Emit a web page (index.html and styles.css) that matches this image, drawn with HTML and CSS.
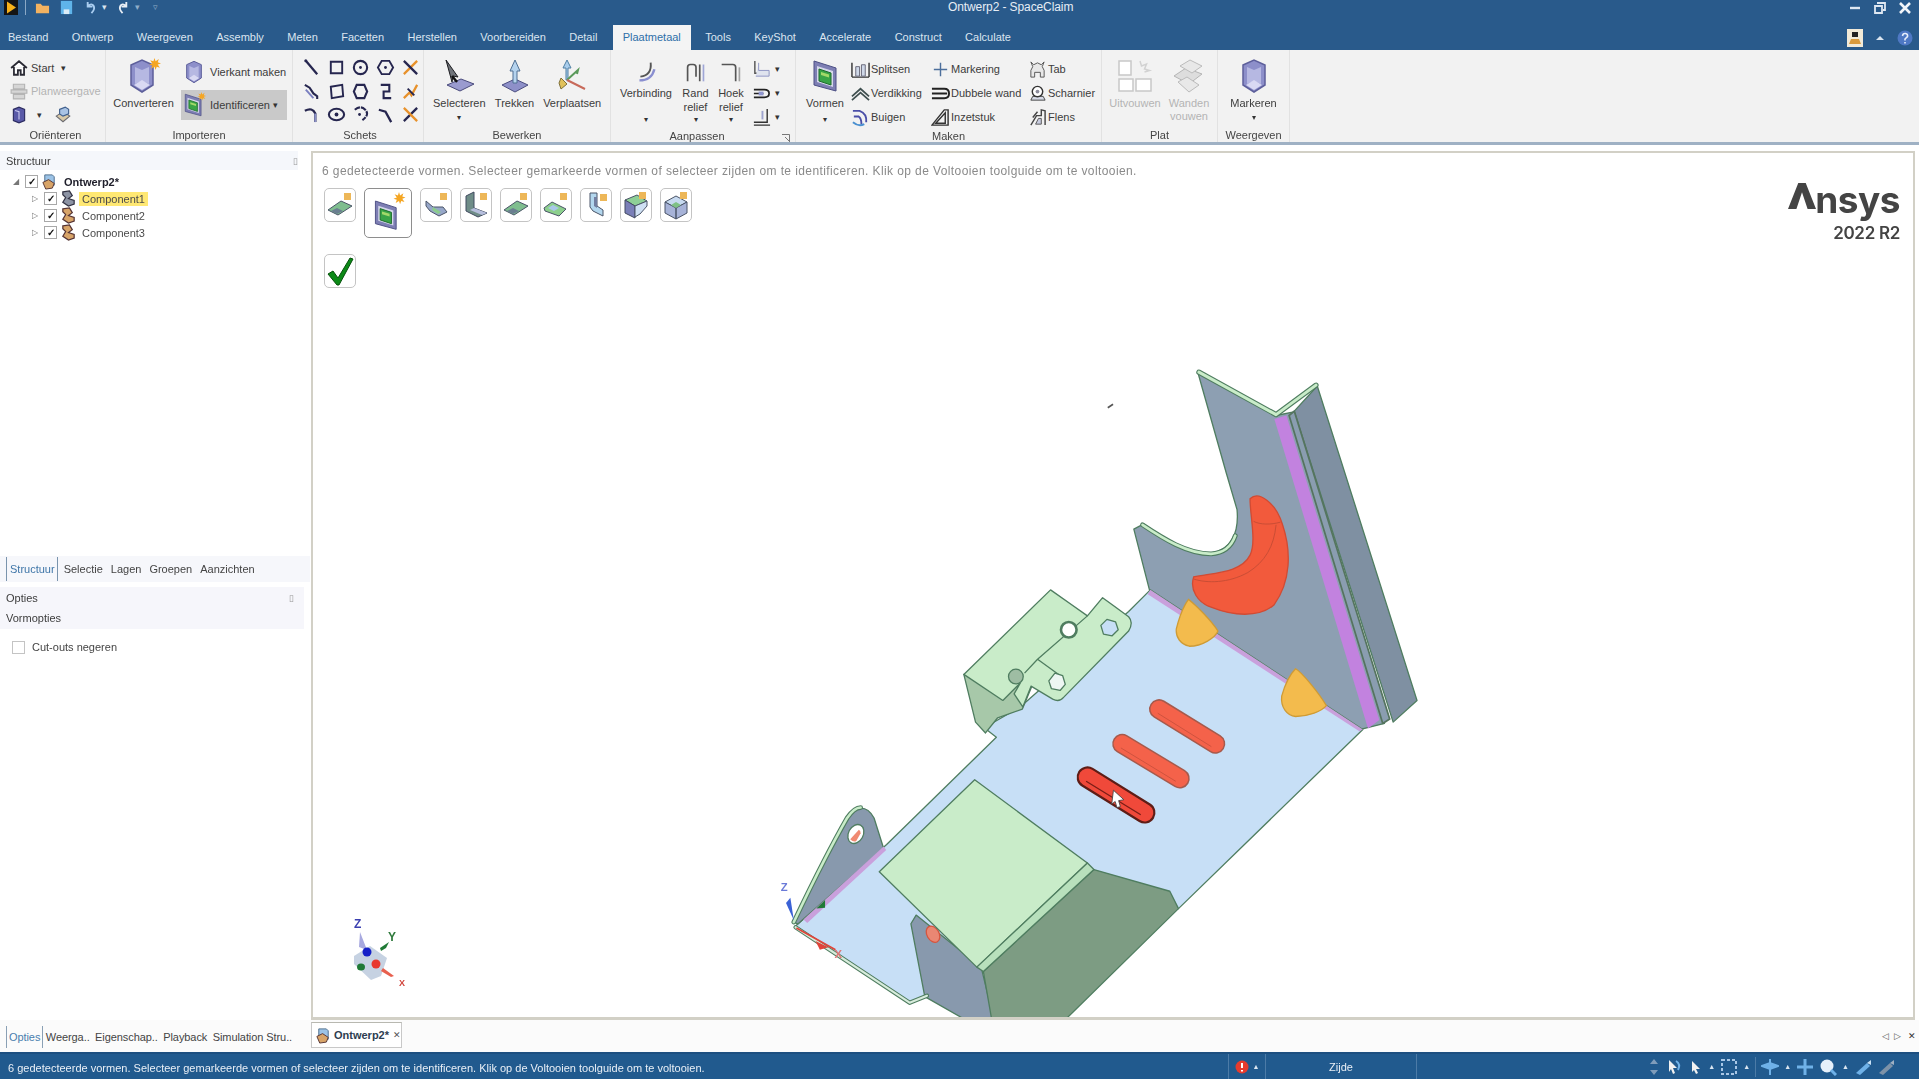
FILE: index.html
```html
<!DOCTYPE html>
<html lang="nl">
<head>
<meta charset="utf-8">
<title>Ontwerp2 - SpaceClaim</title>
<link rel="stylesheet" href="styles.css">
</head>
<body>
<svg class="sprite" xmlns="http://www.w3.org/2000/svg">
  <symbol id="sun" viewBox="0 0 12 12"><path d="M6 0l1 3 3-2-1 3 3 1-3 1 2 3-3-1-1 3-1-3-3 2 1-3-3-1 3-1-2-3 3 1z" fill="#f5a623"/></symbol>
  <symbol id="home" viewBox="0 0 16 16"><path d="M1 8l7-6 7 6M3.500 7v7h3.500v-4h2.500v4h3V7" fill="#fff" stroke="#2a2a34" stroke-width="1.600"/></symbol>
  <symbol id="plan" viewBox="0 0 16 16"><path d="M3 2h10v4H3zM1 7h14v3H1zM3 11h10v4H3z" fill="#d6d6d6" stroke="#b4b4b4"/></symbol>
  <symbol id="cube" viewBox="0 0 16 16"><path d="M3 3l5-2 5 2v10l-5 2-5-2z" fill="#5a5aa8" stroke="#2c2c60"/><path d="M4.500 4l3.500 1v7" fill="none" stroke="#c9c9ef"/></symbol>
  <symbol id="view" viewBox="0 0 16 16"><path d="M2 9l6-4 6 4-6 5z" fill="#d8c9a8" stroke="#6a6a70"/><path d="M5 3l5-2 3 2v4l-5 2-3-2z" fill="#a9c3e4" stroke="#3f5f8d"/></symbol>
  <symbol id="purple" viewBox="0 0 32 36"><path d="M5 7l11-5 11 5v20l-11 7-11-7z" fill="#8d8fca" stroke="#5d5f9b" stroke-width="1.500"/><path d="M9 9l7 3v11l-7 3zM23 9l-7 3v11l7 3z" fill="#b6b8e2"/><path d="M8 27l8-5 8 5-8 5z" fill="#d9d9f3"/></symbol>
  <symbol id="shape" viewBox="0 0 28 36"><path d="M3 3l22 7v23L3 27z" fill="#7e7fb4" stroke="#4c4f84"/><path d="M6 8l16 5v16L6 24z" fill="#d5d7ea"/><path d="M8 11l12 4v12L8 23z" fill="#39a447" stroke="#1d6b2b"/><path d="M10 14l8 2.500v3L10 17z" fill="#a3d96a"/></symbol>
  <symbol id="selectIco" viewBox="0 0 34 36"><path d="M5 27l14-6 13 5-14 7z" fill="#9a9bcf" stroke="#4a4b7c"/><path d="M4 2l12 17-5-1-1 6z" fill="#70747a" stroke="#1b1b1f"/><path d="M10 18l5 6" stroke="#111" stroke-width="2.500"/></symbol>
  <symbol id="pullIco" viewBox="0 0 34 36"><path d="M4 27l13-6 13 6-13 7z" fill="#8e90c9" stroke="#4c4e80"/><path d="M17 2l5 11-3 0v12h-4V13h-3z" fill="#b5d3ee" stroke="#4f6f93"/></symbol>
  <symbol id="moveIco" viewBox="0 0 34 36"><path d="M12 2l4 8h-3v12h-2V10H8z" fill="#a9cdec" stroke="#4f7fa3"/><path d="M12 22l11-10-1 4" fill="none" stroke="#5b9a5b" stroke-width="2"/><path d="M12 22l18 9" stroke="#c86a5a" stroke-width="2"/><path d="M6 20l6 6-6 5-2-6z" fill="#e1c15b" stroke="#7f7039"/></symbol>
  <symbol id="bend" viewBox="0 0 30 30"><path d="M20 5c1 9-3 14-11 15" fill="none" stroke="#555" stroke-width="2"/><path d="M8 24c8 0 14-4 16-12" fill="none" stroke="#8a8fd0" stroke-width="2.500"/></symbol>
  <symbol id="rand" viewBox="0 0 30 30"><path d="M6 25V10q0-3 3-3h3q3 0 3 3v10M19 7v18" fill="none" stroke="#555" stroke-width="1.800"/><path d="M23 7v18" stroke="#9fa6d6" stroke-width="1.800"/></symbol>
  <symbol id="hoek" viewBox="0 0 30 30"><path d="M5 7h12q3 0 3 3v15" fill="none" stroke="#555" stroke-width="1.800"/><path d="M24 10v15" stroke="#a3a3a3" stroke-width="1.800"/></symbol>
  <symbol id="s1" viewBox="0 0 20 20"><path d="M3 1v13h15" fill="none" stroke="#555" stroke-width="1.500"/><path d="M7 3v8h11v6H4" fill="#dfe3ee" stroke="#8d95c2"/></symbol>
  <symbol id="s2" viewBox="0 0 20 20"><path d="M2 6h11q5 0 5 4t-5 4H2M2 10h10" fill="none" stroke="#222" stroke-width="1.800"/><path d="M7 8h5v4H7z" fill="#8f95cf"/></symbol>
  <symbol id="s3" viewBox="0 0 20 20"><path d="M2 15h14V1M2 18h17" fill="none" stroke="#333" stroke-width="1.500"/><path d="M11 3v9" stroke="#9ea4cf" stroke-width="2"/></symbol>
  <symbol id="split" viewBox="0 0 20 20"><path d="M1 18V3M19 18V3M1 18h18" fill="none" stroke="#333" stroke-width="1.500"/><path d="M5 17V7h4v10zM11 17V5h4v12z" fill="#cfd8e8" stroke="#667"/></symbol>
  <symbol id="thick" viewBox="0 0 20 20"><path d="M1 13l9-8 9 8M1 17l9-8 9 8" fill="none" stroke="#3f4f4f" stroke-width="1.800"/></symbol>
  <symbol id="curl" viewBox="0 0 20 20"><path d="M2 3h7q8 3 7 12M3 9h5q3 2 3 8" fill="none" stroke="#4b4fa8" stroke-width="2"/><path d="M2 15q6 5 12 2" fill="none" stroke="#4a90d0" stroke-width="2"/></symbol>
  <symbol id="plus" viewBox="0 0 20 20"><path d="M10 3v14M3 10h14" stroke="#4c6f9c" stroke-width="1.500"/></symbol>
  <symbol id="double" viewBox="0 0 20 20"><path d="M1 5h13q5 0 5 5t-5 5H1M1 10h16" fill="none" stroke="#222" stroke-width="2"/></symbol>
  <symbol id="insert" viewBox="0 0 20 20"><path d="M1 18L14 2h4v16zM5 16L15 5v11z" fill="none" stroke="#333" stroke-width="1.500"/></symbol>
  <symbol id="tab" viewBox="0 0 20 20"><path d="M3 2l3 3 4-2 4 2 3-3-2 5 2 4v7h-4v-5H7v5H3v-7l2-4z" fill="#e8e8e8" stroke="#555"/></symbol>
  <symbol id="hinge" viewBox="0 0 20 20"><path d="M3 17h15l-2-4H5z" fill="#d5d9e6" stroke="#444"/><circle cx="10" cy="8" r="5.500" fill="#fff" stroke="#333" stroke-width="1.500"/><circle cx="10" cy="8" r="2" fill="#8c8c9c"/></symbol>
  <symbol id="flange" viewBox="0 0 20 20"><path d="M3 18l6-10h5V2l4 1v15M5 10l5-6" fill="none" stroke="#444" stroke-width="1.500"/><path d="M8 17l3-6h3v6z" fill="#c8cce0" stroke="#555"/></symbol>
  <symbol id="unfold" viewBox="0 0 36 36"><path d="M2 3h12v14H2zM2 21h14v12H2zM19 21h15v12H19z" fill="#fff" stroke="#c8c8c8" stroke-width="1.500"/><path d="M23 3l1.500 5 5-2-2 5 5 1.500-5 1.500" fill="none" stroke="#d2d2d2" stroke-width="1.500"/></symbol>
  <symbol id="walls" viewBox="0 0 36 36"><path d="M3 18l12-8 16 6-13 10z" fill="#ddd" stroke="#b5b5b5"/><path d="M9 8l10-6 12 6-10 7zM7 24l11 10 10-7-12-8z" fill="#e8e8e8" stroke="#bbb"/></symbol>
  <symbol id="tp" viewBox="0 0 30 32"><path d="M3 21l13-9 11 5-14 9z" fill="#7fbe8f" stroke="#4b5568"/><path d="M6 22l6-3 6 3-6 3z" fill="#6a7f90"/><rect x="19" y="4" width="7" height="7" fill="#edb758"/></symbol>
  <symbol id="tp2" viewBox="0 0 30 32"><path d="M5 12l7 6 10 0 4 5-8 4-9-5-4-5z" fill="#97a7c9" stroke="#4b5568"/><path d="M12 18l8 5-3 2-6-4z" fill="#8ccc8e"/><rect x="19" y="4" width="7" height="7" fill="#edb758"/></symbol>
  <symbol id="tp3" viewBox="0 0 30 32"><path d="M5 7l8-4v16l13 5-9 4-12-6z" fill="#6f8d88" stroke="#414a60"/><path d="M13 19l13 5-5 2-12-5z" fill="#b6bedd"/><rect x="19" y="4" width="7" height="7" fill="#edb758"/></symbol>
  <symbol id="tp4" viewBox="0 0 30 32"><path d="M3 19l8-6 14 7-7 7-14-5z" fill="#8ccf8d" stroke="#4b5568"/><path d="M7 19l5-3 6 3-5 3z" fill="#a9c8e8"/><rect x="19" y="4" width="7" height="7" fill="#edb758"/></symbol>
  <symbol id="tp5" viewBox="0 0 30 32"><path d="M9 4h7v13l6 4v6l-10-5-3-4z" fill="#b3d7ee" stroke="#4b5568"/><path d="M13 8h3v11l-3-2z" fill="#727ea0"/><rect x="19" y="5" width="7" height="7" fill="#edb758"/></symbol>
  <symbol id="tp6" viewBox="0 0 30 32"><path d="M4 11l12-5 10 6-12 5z" fill="#8ecf96" stroke="#4b5568"/><path d="M4 11v13l10 5V17z" fill="#7a7fb8" stroke="#414a60"/><path d="M14 17l12-5v5l-7 8-5 3z" fill="#cfe0f3" stroke="#4b5568"/><rect x="18" y="3" width="7" height="7" fill="#edb758"/></symbol>
  <symbol id="tp7" viewBox="0 0 30 32"><path d="M15 7l11 6-11 6-11-6z" fill="#c7daf0" stroke="#4b5568"/><path d="M4 13v11l11 6V19zM26 13v11l-11 6V19z" fill="#a7b3d8" stroke="#4b5568"/><path d="M15 19l-5-3 5-3 5 3z" fill="#7ec185"/><rect x="19" y="3" width="7" height="7" fill="#edb758"/></symbol>
  <symbol id="comp" viewBox="0 0 18 18"><path d="M3 2l7-1 3 5-4 3 6 2v4l-6 2-6-4 3-5-3-3z" fill="#d8a468" stroke="#533" stroke-width="1.300"/></symbol>
  <symbol id="comp1" viewBox="0 0 18 18"><path d="M3 2l7-1 3 5-4 3 6 2v4l-6 2-6-4 3-5-3-3z" fill="#8c93a4" stroke="#334" stroke-width="1.300"/></symbol>
  <symbol id="doc" viewBox="0 0 18 18"><path d="M4 2h8l2 2v9H4z" fill="#9cc3e6" stroke="#4c6d8c"/><path d="M2 10l6-3 6 4-2 5-7 1z" fill="#d8a468" stroke="#533"/></symbol>
</svg>

<div class="app">
  <header class="titlebar">
    <div class="qat">
      <svg class="qi logo-play" viewBox="0 0 14 15"><rect width="14" height="15" fill="#141414"/><path d="M3 1.500l9 6-9 6z" fill="#f7b21a"/></svg>
      <span class="qat-sep"></span>
      <svg class="qi" viewBox="0 0 16 16"><path d="M1 4h5l2 2h7v8H1z" fill="#f2b261"/></svg>
      <svg class="qi" viewBox="0 0 16 16"><path d="M2 1h12v14H2z" fill="#5fb4ea"/><path d="M5 10h6v5H5z" fill="#dcecf7"/></svg>
      <svg class="qi" viewBox="0 0 16 16"><path d="M5 2v5h5M5 7c5-6 10 1 4 7" fill="none" stroke="#a9cdf0" stroke-width="2"/></svg>
      <span class="qcaret">▾</span>
      <svg class="qi" viewBox="0 0 16 16"><path d="M11 2v5H6M11 7C6 1 1 8 7 14" fill="none" stroke="#e8eef5" stroke-width="2"/></svg>
      <span class="qcaret dim">▾</span>
      <span class="qcaret dim qlast">▿</span>
    </div>
    <div class="title">Ontwerp2 - SpaceClaim</div>
    <div class="winctl">
      <svg class="wi" viewBox="0 0 14 14"><path d="M2 7h10" stroke="#dfe8f2" stroke-width="2.400"/></svg>
      <svg class="wi" viewBox="0 0 14 14"><path d="M4 2h8v7h-2M2 5h7v7H2z" fill="none" stroke="#dfe8f2" stroke-width="1.800"/></svg>
      <svg class="wi" viewBox="0 0 14 14"><path d="M2 2l10 10M12 2L2 12" stroke="#f2f5f9" stroke-width="2.600"/></svg>
    </div>
  </header>

  <nav class="tabs">
    <span class="tab">Bestand</span><span class="tab">Ontwerp</span><span class="tab">Weergeven</span><span class="tab">Assembly</span><span class="tab">Meten</span><span class="tab">Facetten</span><span class="tab">Herstellen</span><span class="tab">Voorbereiden</span><span class="tab">Detail</span><span class="tab active">Plaatmetaal</span><span class="tab">Tools</span><span class="tab">KeyShot</span><span class="tab">Accelerate</span><span class="tab">Construct</span><span class="tab">Calculate</span>
    <div class="tabs-right">
      <svg class="user" viewBox="0 0 16 18"><rect width="16" height="18" fill="#f1ead8"/><path d="M5 3h6v5H5z" fill="#222"/><path d="M2 15l2-5h8l2 5z" fill="#d99a3c"/></svg>
      <svg class="chev" viewBox="0 0 14 8"><path d="M3 6l4-4 4 4z" fill="#dbe5f0"/></svg>
      <svg class="help" viewBox="0 0 16 16"><circle cx="8" cy="8" r="7.500" fill="#4e78c4"/><path d="M5.500 6q.5-3 3-2.500t2 3L8 9v1.500M8 12v1.500" fill="none" stroke="#e7eefb" stroke-width="1.600"/></svg>
    </div>
  </nav>

  <section class="ribbon">
    <div class="group g-orient">
      <div class="body col-rows">
        <div class="row"><svg class="ico"><use href="#home"/></svg><span>Start</span><span class="caret">▾</span></div>
        <div class="row off"><svg class="ico"><use href="#plan"/></svg><span>Planweergave</span></div>
        <div class="row"><svg class="ico"><use href="#cube"/></svg><span class="caret wide">▾</span><svg class="ico"><use href="#view"/></svg></div>
      </div>
      <div class="glabel lab-orient">Oriënteren</div>
    </div>

    <div class="group g-import">
      <div class="body">
        <div class="big w75"><svg class="bigico" viewBox="0 0 36 36"><use href="#purple" width="32" height="36"/><use href="#sun" x="22" y="0" width="13" height="13"/></svg><span>Converteren</span></div>
        <div class="import-col">
          <div class="row r-vk"><svg class="ico22"><use href="#purple"/></svg><span>Vierkant maken</span></div>
          <div class="row r-id"><svg class="ico22 idico" viewBox="0 0 26 28"><use href="#shape" width="22" height="28"/><use href="#sun" x="15" y="0" width="10" height="10"/></svg><span>Identificeren</span><span class="caret">▾</span></div>
        </div>
      </div>
      <div class="glabel">Importeren</div>
    </div>

    <div class="group g-sketch">
      <div class="body sketch-grid">
        <svg class="sk" viewBox="0 0 20 20"><path d="M4 3l12 14" stroke="#26264f" stroke-width="2.400"/><circle cx="4" cy="3" r="1.600" fill="#26264f"/></svg>
        <svg class="sk" viewBox="0 0 20 20"><path d="M4 4h12v12H4z" fill="none" stroke="#26264f" stroke-width="2"/></svg>
        <svg class="sk" viewBox="0 0 20 20"><circle cx="10" cy="10" r="7" fill="none" stroke="#26264f" stroke-width="2.200"/><circle cx="10" cy="10" r="1.500" fill="#26264f"/></svg>
        <svg class="sk" viewBox="0 0 20 20"><path d="M6 3h8l4 7-4 7H6l-4-7z" fill="none" stroke="#26264f" stroke-width="2"/><circle cx="10" cy="10" r="1.500" fill="#26264f"/></svg>
        <svg class="sk" viewBox="0 0 20 20"><path d="M3 17L17 3" stroke="#e7912b" stroke-width="2.400"/><path d="M3 3l14 14" stroke="#26264f" stroke-width="2.400"/></svg>
        <svg class="sk" viewBox="0 0 20 20"><path d="M3 3l5 3 4 6 4 3v3" fill="none" stroke="#26264f" stroke-width="2.200"/><path d="M4 8l8 9" stroke="#7a7fc0" stroke-width="2"/></svg>
        <svg class="sk" viewBox="0 0 20 20"><path d="M4 5l12-2 1 12-12 2z" fill="none" stroke="#26264f" stroke-width="2"/></svg>
        <svg class="sk" viewBox="0 0 20 20"><path d="M6 3h8l3 7-3 7H6l-3-7z" fill="none" stroke="#26264f" stroke-width="2.200"/></svg>
        <svg class="sk" viewBox="0 0 20 20"><path d="M5 3h9v7H8v7h8" fill="none" stroke="#26264f" stroke-width="2.200"/></svg>
        <svg class="sk" viewBox="0 0 20 20"><path d="M3 17l6-6 2 3 6-11" fill="none" stroke="#e7912b" stroke-width="2.400"/><path d="M7 7l7 7" stroke="#26264f" stroke-width="2"/></svg>
        <svg class="sk" viewBox="0 0 20 20"><path d="M3 6q8-4 11 3v9" fill="none" stroke="#26264f" stroke-width="2.400"/><path d="M14 9v9" stroke="#8c92c8" stroke-width="2"/></svg>
        <svg class="sk" viewBox="0 0 20 20"><ellipse cx="10" cy="10" rx="8" ry="6" fill="none" stroke="#26264f" stroke-width="2.200"/><circle cx="10" cy="10" r="2" fill="#26264f"/></svg>
        <svg class="sk" viewBox="0 0 20 20"><path d="M4 5q6-5 11 0t-3 11" fill="none" stroke="#26264f" stroke-width="2.200" stroke-dasharray="6 1"/><circle cx="9" cy="10" r="1.500" fill="#26264f"/></svg>
        <svg class="sk" viewBox="0 0 20 20"><path d="M3 5l7 2 6 11" fill="none" stroke="#26264f" stroke-width="2.400"/></svg>
        <svg class="sk" viewBox="0 0 20 20"><path d="M3 17L17 3" stroke="#26264f" stroke-width="2.400"/><path d="M3 3l14 14" stroke="#e7912b" stroke-width="2.400"/></svg>
      </div>
      <div class="glabel lab-sketch">Schets</div>
    </div>

    <div class="group g-edit">
      <div class="body">
        <div class="big w71"><svg class="bigico"><use href="#selectIco"/></svg><span>Selecteren</span><span class="dot">▾</span></div>
        <div class="big w40"><svg class="bigico"><use href="#pullIco"/></svg><span>Trekken</span></div>
        <div class="big w76"><svg class="bigico"><use href="#moveIco"/></svg><span>Verplaatsen</span></div>
      </div>
      <div class="glabel">Bewerken</div>
    </div>

    <div class="group g-adjust">
      <div class="body adjust">
        <div class="med w64"><svg class="medico"><use href="#bend"/></svg><span>Verbinding</span><span class="dot">▾</span></div>
        <div class="med w35"><svg class="medico"><use href="#rand"/></svg><span>Rand relief</span><span class="dot">▾</span></div>
        <div class="med w36"><svg class="medico"><use href="#hoek"/></svg><span>Hoek relief</span><span class="dot">▾</span></div>
        <div class="mini">
          <div class="row"><svg class="ico18"><use href="#s1"/></svg><span class="caret">▾</span></div>
          <div class="row"><svg class="ico18"><use href="#s2"/></svg><span class="caret">▾</span></div>
          <div class="row"><svg class="ico18"><use href="#s3"/></svg><span class="caret">▾</span></div>
        </div>
      </div>
      <div class="glabel lab-adjust"><span>Aanpassen</span><svg class="launch" viewBox="0 0 8 8"><path d="M0 .5h7.500V8M3 3l4 4" fill="none" stroke="#777"/></svg></div>
    </div>

    <div class="group g-make">
      <div class="body">
        <div class="big w58"><svg class="bigico"><use href="#shape"/></svg><span>Vormen</span><span class="dot">▾</span></div>
        <div class="rows c1">
          <div class="row"><svg class="ico18"><use href="#split"/></svg><span>Splitsen</span></div>
          <div class="row"><svg class="ico18"><use href="#thick"/></svg><span>Verdikking</span></div>
          <div class="row"><svg class="ico18"><use href="#curl"/></svg><span>Buigen</span></div>
        </div>
        <div class="rows c2">
          <div class="row"><svg class="ico18"><use href="#plus"/></svg><span>Markering</span></div>
          <div class="row"><svg class="ico18"><use href="#double"/></svg><span>Dubbele wand</span></div>
          <div class="row"><svg class="ico18"><use href="#insert"/></svg><span>Inzetstuk</span></div>
        </div>
        <div class="rows c3">
          <div class="row"><svg class="ico18"><use href="#tab"/></svg><span>Tab</span></div>
          <div class="row"><svg class="ico18"><use href="#hinge"/></svg><span>Scharnier</span></div>
          <div class="row"><svg class="ico18"><use href="#flange"/></svg><span>Flens</span></div>
        </div>
      </div>
      <div class="glabel">Maken</div>
    </div>

    <div class="group g-flat">
      <div class="body flat">
        <div class="big w58 off"><svg class="bigico"><use href="#unfold"/></svg><span>Uitvouwen</span></div>
        <div class="big w50 off"><svg class="bigico"><use href="#walls"/></svg><span>Wanden vouwen</span></div>
      </div>
      <div class="glabel">Plat</div>
    </div>

    <div class="group g-view">
      <div class="body">
        <div class="big w72"><svg class="bigico"><use href="#purple"/></svg><span>Markeren</span><span class="dot">▾</span></div>
      </div>
      <div class="glabel">Weergeven</div>
    </div>
  </section>

  <main class="main">
    <aside class="left">
      <div class="panel-head"><span>Structuur</span><span class="pin">▯</span></div>
      <div class="tree">
        <div class="node root"><span class="tw open">◢</span><span class="cb on">✓</span><svg class="ti"><use href="#doc"/></svg><b>Ontwerp2*</b></div>
        <div class="node"><span class="tw">▷</span><span class="cb on">✓</span><svg class="ti"><use href="#comp1"/></svg><span class="tl sel">Component1</span></div>
        <div class="node"><span class="tw">▷</span><span class="cb on">✓</span><svg class="ti"><use href="#comp"/></svg><span class="tl">Component2</span></div>
        <div class="node"><span class="tw">▷</span><span class="cb on">✓</span><svg class="ti"><use href="#comp"/></svg><span class="tl">Component3</span></div>
      </div>
      <div class="ptabs"><span class="ptab active">Structuur</span><span class="ptab">Selectie</span><span class="ptab">Lagen</span><span class="ptab">Groepen</span><span class="ptab">Aanzichten</span></div>
      <div class="options-head">
        <div class="oh1"><span>Opties</span><span class="pin">▯</span></div>
        <div class="oh2">Vormopties</div>
      </div>
      <label class="opt"><span class="cb"></span><span>Cut-outs negeren</span></label>
    </aside>

    <section class="canvas">
      <p class="hint">6 gedetecteerde vormen. Selecteer gemarkeerde vormen of selecteer zijden om te identificeren. Klik op de Voltooien toolguide om te voltooien.</p>
      <div class="tools">
        <button class="tbtn"><svg class="tsv"><use href="#tp"/></svg></button>
        <button class="tbtn big-t"><svg class="tsv-b" viewBox="0 0 36 40"><use href="#shape" x="4" y="6" width="24" height="32"/><use href="#sun" x="22" y="1" width="12" height="12"/></svg></button>
        <button class="tbtn"><svg class="tsv"><use href="#tp2"/></svg></button>
        <button class="tbtn"><svg class="tsv"><use href="#tp3"/></svg></button>
        <button class="tbtn"><svg class="tsv"><use href="#tp"/></svg></button>
        <button class="tbtn"><svg class="tsv"><use href="#tp4"/></svg></button>
        <button class="tbtn"><svg class="tsv"><use href="#tp5"/></svg></button>
        <button class="tbtn"><svg class="tsv"><use href="#tp6"/></svg></button>
        <button class="tbtn"><svg class="tsv"><use href="#tp7"/></svg></button>
      </div>
      <button class="tbtn ok"><svg class="tsv" viewBox="0 0 30 32"><path d="M3 19l5-3 5 7L25 3l3 1-14 26h-2z" fill="#0c8a17" stroke="#06500c"/></svg></button>

      <div class="brand">
        <div class="brand-name"><span class="brand-a">A<svg class="brand-mark" viewBox="0 0 30 30"><path d="M0 29L11 1h8l11 28h-9L15 11 9 29z" fill="#444"/></svg></span>nsys</div>
        <div class="brand-ver">2022 R2</div>
      </div>

      <svg class="triad" viewBox="0 0 100 110">
        <path d="M24 66l16-10 17 12-6 18-10 4-17-16z" fill="#c6d2e2"/>
        <path d="M30 42l7 18-8-3z" fill="#a8a9df"/>
        <circle cx="37" cy="62" r="4.500" fill="#1520c8"/>
        <path d="M50 58l9-6-3 6-5 3z" fill="#1f7a36"/>
        <ellipse cx="31" cy="77" rx="4" ry="3.500" fill="#1f7a36"/>
        <circle cx="46" cy="74" r="4.500" fill="#e8382e"/>
        <path d="M53 78l11 8-3 1-10-6z" fill="#e8604e"/>
        <text x="24" y="38" class="tx z">Z</text><text x="58" y="51" class="tx y">Y</text><text x="69" y="96" class="tx x">X</text>
      </svg>

      <svg class="model" viewBox="0 0 1568 1568">
        <g stroke="#4f7d60" stroke-width="3" stroke-linejoin="round">
          <path d="M1232 118L1285 60 1515 785 1460 835z" fill="#7f90a2"/>
          <path d="M1010 30L1190 128 1228 120 1440 838 1385 852 898 530 862 390 885 378C930 410 985 445 1040 445 1085 440 1105 400 1100 345L1075 260z" fill="#8d9fb2"/>
          <path d="M1186 136L1214 128 1428 830 1402 850z" fill="#c282df" stroke="none"/>
          <path d="M1220 128L1232 118 1452 828 1436 838z" fill="#8a9db0" stroke="#55745f" stroke-width="4"/>
          <path d="M900 530L1390 852 965 1265 600 1300 385 1465 345 1480 82 1305 292 1117 545 870 517 848 600 800 850 580z" fill="#c7dff6"/>
          <path d="M900 530L1390 852 1382 856 894 540z" fill="#c9a0dc" stroke="none"/>
          <path d="M76 1296C116 1216 161 1126 201 1056 221 1026 246 1026 263 1056L285 1126 88 1300z" fill="#8899ad"/>
          <path d="M100 1290L285 1122 291 1130 109 1298z" fill="#c9a0dc" stroke="none"/>
          <ellipse cx="221" cy="1093" rx="17" ry="23" transform="rotate(28 221 1093)" fill="#fff"/>
          <path d="M208 1105q8 8 14 4l10-18q0-6-4-8z" fill="#f08a72" stroke="none"/>
          <path d="M360 1280L510 1400 540 1525H480L380 1468 348 1300z" fill="#8899ad"/>
          <ellipse cx="399" cy="1324" rx="14" ry="20" transform="rotate(-30 399 1324)" fill="#e98773" stroke="#d6553e"/>
          <path d="M770 1175L945 1225 965 1265 700 1525H535L515 1410z" fill="#7d9c83"/>
          <path d="M495 968L755 1160 500 1400 275 1180z" fill="#c9ecc9"/>
          <path d="M755 1160L770 1175 515 1410 500 1400z" fill="#b8e0bc"/>
          <path d="M470 725L497 835 520 860 548 825 605 805 630 745z" fill="#a7c8a9"/>
          <path d="M470 725L670 530 755 590 790 548 850 592Q862 605 850 625L700 778Q690 790 675 782L625 752 606 800 586 770 600 745 560 785z" fill="#c9ecc9"/>
          <path d="M640 690L755 590M640 690L610 722M640 690L695 730" fill="none"/>
          <circle cx="712" cy="622" r="18" fill="#fff" stroke-width="6"/>
          <circle cx="590" cy="730" r="17" fill="#9ebda3"/>
          <path d="M680 722L698 728 704 748 692 762 672 758 666 740z" fill="#eef6f3"/>
          <path d="M800 598L820 604 826 622 812 636 792 632 786 612z" fill="#c7dff6"/>
        </g>
        <g fill="none" stroke-linejoin="round" stroke-linecap="round">
          <path d="M1012 28L1190 126 1282 58" stroke="#4f7d60" stroke-width="12"/>
          <path d="M1012 28L1190 126 1282 58" stroke="#c9ecc9" stroke-width="7"/>
          <path d="M882 380C930 412 985 447 1040 447 1072 445 1088 428 1096 405" stroke="#4f7d60" stroke-width="11"/>
          <path d="M882 380C930 412 985 447 1040 447 1072 445 1088 428 1096 405" stroke="#c9ecc9" stroke-width="6"/>
          <path d="M78 1296C116 1216 161 1126 201 1056 212 1040 222 1032 232 1032" stroke="#4f7d60" stroke-width="11"/>
          <path d="M78 1296C116 1216 161 1126 201 1056 212 1040 222 1032 232 1032" stroke="#c9ecc9" stroke-width="6"/>
          <path d="M82 1308L345 1482 385 1466" stroke="#4f7d60" stroke-width="10"/>
          <path d="M82 1308L345 1482 385 1466" stroke="#d8ecdc" stroke-width="5"/>
        </g>
        <path d="M1130 320c20-20 60 10 75 60 20 60 20 130-20 185-35 30-95 25-145 5-30-10-50-40-40-70 50-10 110-10 130-50 15-30 0-90 0-130z" fill="#f25a3c" stroke="#d14b33" stroke-width="3"/>
        <path d="M1138 372c15 8 40 8 62 2M1000 505c30 10 80 10 125-15 40-25 60-60 65-110" fill="none" stroke="#c34b34" stroke-width="2"/>
        <path d="M988 552C1005 565 1040 600 1056 625 1050 640 1020 660 990 660 970 655 958 640 960 620 965 600 975 570 988 552z" fill="#f3bb4d" stroke="#cf9b35" stroke-width="3"/>
        <path d="M1235 712C1250 720 1290 770 1306 797 1295 810 1265 822 1235 822 1215 820 1200 800 1203 775 1210 750 1222 725 1235 712z" fill="#f3bb4d" stroke="#cf9b35" stroke-width="3"/>
        <g stroke-linecap="round" fill="none">
          <path d="M920 805l130 80" stroke="#a65a4c" stroke-width="46"/><path d="M920 805l130 80" stroke="#f4624a" stroke-width="39"/>
          <path d="M918 815l122 76" stroke="#c9503c" stroke-width="2"/>
          <path d="M835 885l133 80" stroke="#a65a4c" stroke-width="46"/><path d="M835 885l133 80" stroke="#f4624a" stroke-width="39"/>
          <path d="M833 895l125 76" stroke="#c9503c" stroke-width="2"/>
          <path d="M755 962l132 82" stroke="#5e1d16" stroke-width="50"/><path d="M755 962l132 82" stroke="#f0493a" stroke-width="40"/>
          <path d="M753 972l124 76" stroke="#7a1d16" stroke-width="3"/>
        </g>
        <path d="M815 992l24 22-12 2 4 14-8 2-4-14-8 6z" fill="#fff" stroke="#444" stroke-width="2"/>
        <path d="M802 110l12-8" stroke="#555" stroke-width="4"/>
        <path d="M70 1240l-10 12 18 40z" fill="#3b62d6"/><path d="M130 1265l20-20v18z" fill="#1f7a36"/>
        <path d="M84 1310l90 50" stroke="#e0443a" stroke-width="4"/><path d="M128 1340l30 14-20 6z" fill="#e0443a"/>
        <text x="48" y="1224" class="mt mz">Z</text><text x="172" y="1378" class="mt mx">X</text>
      </svg>
    </section>
  </main>

  <div class="bottomtabs">
    <div class="btabs">
      <span class="btab active">Opties</span><span class="btab">Weerga..</span><span class="btab">Eigenschap..</span><span class="btab">Playback</span><span class="btab">Simulation Stru..</span>
    </div>
    <div class="doctab"><svg class="ti"><use href="#doc"/></svg><b>Ontwerp2*</b><span class="x">✕</span></div>
    <div class="doc-nav"><span>◁</span><span>▷</span><span class="navx">✕</span></div>
  </div>

  <footer class="status">
    <div class="smsg">6 gedetecteerde vormen. Selecteer gemarkeerde vormen of selecteer zijden om te identificeren. Klik op de Voltooien toolguide om te voltooien.</div>
    <div class="scell alert"><svg class="ic14" viewBox="0 0 14 14"><circle cx="7" cy="7" r="6.500" fill="#e63b2e"/><path d="M7 3v5M7 10v1.500" stroke="#fff" stroke-width="2"/></svg><span class="up">▲</span></div>
    <div class="scell zijde">Zijde</div>
    <div class="stools">
      <svg class="ic14 faded" viewBox="0 0 14 20"><path d="M7 2l4 5H3zM7 18l4-5H3z" fill="#7f9cba"/></svg>
      <svg class="ic18" viewBox="0 0 18 18"><path d="M3 2l8 8-4 0 2 5-2 1-2-5-2 3z" fill="#f1f1f1"/><path d="M10 3q5 3 2 9" fill="none" stroke="#6fb1e8" stroke-width="2"/></svg>
      <svg class="ic14" viewBox="0 0 14 14"><path d="M3 1l8 8-4 0 2 4-2 1-2-4-2 2z" fill="#f1f1f1"/></svg><span class="up">▲</span>
      <svg class="ic18" viewBox="0 0 18 18"><path d="M2 2h14v14H2z" fill="none" stroke="#a9c7e6" stroke-width="2" stroke-dasharray="3 2"/></svg><span class="up">▲</span>
      <span class="ssep"></span>
      <svg class="ic18" viewBox="0 0 18 18"><path d="M9 1v16M1 8l8-3 8 3-8 3z" fill="#6fb1e8" stroke="#6fb1e8" stroke-width="2"/></svg><span class="up">▲</span>
      <svg class="ic18" viewBox="0 0 18 18"><path d="M9 1v16M1 9h16" stroke="#6fb1e8" stroke-width="3"/></svg>
      <svg class="ic18" viewBox="0 0 18 18"><circle cx="8" cy="8" r="6.500" fill="#e6f0fa"/><path d="M12 12l5 5" stroke="#6fb1e8" stroke-width="3"/></svg><span class="up">▲</span>
      <svg class="ic18" viewBox="0 0 18 18"><path d="M2 15L13 5l3 3-10 9z" fill="#6fb1e8"/><path d="M13 5l4-3v5z" fill="#c9e2f6"/></svg>
      <svg class="ic18" viewBox="0 0 18 18"><path d="M2 15L13 5l3 3-10 9z" fill="#7d92a8"/><path d="M13 5l4-3v5z" fill="#9fb0c2"/></svg>
    </div>
  </footer>
</div>
</body>
</html>
```
FILE: styles.css
```css
* { box-sizing: border-box; }
html, body { margin: 0; height: 100%; overflow: hidden; }
body { font: 11px "Liberation Sans", Arial, sans-serif; color: #3c3c3c; background: #fff; }
.sprite { display: none; }
.app { display: flex; flex-direction: column; width: 1919px; height: 1079px; filter: blur(.45px); }

.titlebar { flex: 0 0 25px; height: 25px; padding-bottom: 10px; background: #295a8b; display: flex; align-items: center; color: #e6edf5; }
.qat { flex: 0 0 948px; height: 15px; display: flex; align-items: center; gap: 9px; padding-left: 4px; }
.qi { width: 15px; height: 15px; flex: none; }
.logo-play { width: 14px; height: 15px; }
.qat-sep { width: 1px; height: 15px; background: #8aa8c6; margin: 0 0 0 -2px; }
.qcaret { font-size: 9px; line-height: 15px; color: #d8e3ee; margin: 0 0 0 -5px; }
.qcaret.dim { color: #8fadc9; }
.qcaret.qlast { margin-left: 4px; }
.title { font-size: 12px; line-height: 15px; letter-spacing: -.1px; }
.winctl { margin-left: auto; display: flex; gap: 11px; padding-right: 7px; }
.wi { width: 14px; height: 14px; }

.tabs { flex: 0 0 25px; background: #295a8b; display: flex; align-items: stretch; gap: 23.400px; padding-left: 8px; color: #dbe5f0; }
.tab { line-height: 25px; }
.tab.active { margin: 0 -9px 0 -8px; padding: 0 10px; background: #f4f4f4; color: #2e6fa8; }
.tabs-right { margin-left: auto; display: flex; align-items: center; gap: 10px; padding-right: 6px; }
.user { width: 16px; height: 18px; }
.chev { width: 14px; height: 8px; }
.help { width: 16px; height: 16px; }

.ribbon { flex: 0 0 95px; display: flex; background: #f2f2f2; border-bottom: 3px solid #9fb1c4; }
.group { display: flex; flex-direction: column; border-right: 1px solid #e2e2e2; height: 92px; }
.body { flex: 0 0 77px; display: flex; }
.glabel { flex: 1; display: flex; justify-content: center; align-items: center; color: #444; position: relative; line-height: 14px; }
.lab-orient { padding-left: 6px; }
.lab-sketch { padding-left: 4px; }
.lab-adjust { padding-right: 12px; }
.g-orient { width: 106px; }
.g-import { width: 187px; }
.g-sketch { width: 131px; }
.g-edit { width: 187px; }
.g-adjust { width: 185px; }
.g-make { width: 306px; }
.g-flat { width: 116px; }
.g-view { width: 72px; }

.row { display: flex; align-items: center; gap: 3px; white-space: nowrap; }
.off { color: #b4b4b4; }
.caret { font-size: 9px; color: #333; margin-left: 4px; }
.caret.wide { margin: 0 9px 0 6px; }
.dot { font-size: 8px; color: #333; line-height: 10px; margin-top: auto; padding-bottom: 4px; }
.ico { width: 18px; height: 18px; flex: none; }
.ico18 { width: 19px; height: 19px; flex: none; }
.ico22 { width: 22px; height: 24px; flex: none; }

.col-rows { flex-direction: column; padding: 6px 0 0 10px; }
.col-rows .row { height: 23.500px; }

.big { display: flex; flex-direction: column; align-items: center; text-align: center; line-height: 13px; padding-top: 8px; }
.bigico { width: 36px; height: 36px; margin-bottom: 3px; flex: none; }
.w75 { width: 75px; } .w71 { width: 71px; } .w40 { width: 40px; } .w76 { width: 76px; }
.w58 { width: 58px; } .w50 { width: 50px; } .w72 { width: 72px; }

.import-col { display: flex; flex-direction: column; padding-top: 9px; gap: 5px; }
.import-col .row { width: 106px; padding-left: 2px; }
.r-vk { height: 26px; gap: 5px; }
.r-id { height: 30px; gap: 3px; background: #c9c9c9; }
.r-id .caret { margin-left: 0; }
.idico { width: 24px; height: 26px; }

.sketch-grid { display: grid; grid-template-columns: repeat(5, 24.800px); grid-auto-rows: 23.500px; padding: 6px 0 0 6px; justify-items: center; align-items: center; }
.sk { width: 19px; height: 19px; }

.adjust { padding-left: 3px; }
.med { display: flex; flex-direction: column; align-items: center; text-align: center; line-height: 14px; padding-top: 8px; }
.w64 { width: 64px; } .w35 { width: 35px; } .w36 { width: 36px; }
.medico { width: 28px; height: 28px; flex: none; }
.mini { display: flex; flex-direction: column; padding: 7px 0 0 3px; }
.mini .row { height: 24px; gap: 0; }
.launch { position: absolute; right: 5px; top: 5px; width: 8px; height: 8px; }

.rows { display: flex; flex-direction: column; padding-top: 7px; }
.rows .row { height: 24px; gap: 1px; }
.c1 { width: 80px; margin-left: -3px; }
.c2 { width: 97px; }
.c3 { width: 68px; }
.flat { padding-left: 4px; }
.g-flat .big span { padding: 0 2px; }

.main { flex: 1; display: flex; min-height: 0; }
.left { flex: 0 0 310px; display: flex; flex-direction: column; }
.panel-head { height: 19px; margin: 6px 12px 0 0; padding-left: 6px; display: flex; justify-content: space-between; align-items: center; background: #f5f7fb; }
.pin { color: #999; font-size: 9px; }
.tree { flex: 1; padding: 3px 0 0 0; }
.node { height: 17px; display: flex; align-items: center; position: relative; padding-left: 30px; }
.node.root { padding-left: 11px; }
.node b { font-size: 11px; color: #1e1e2a; margin-left: 6px; }
.tw { width: 10px; font-size: 8px; color: #777; text-align: center; flex: none; }
.cb { width: 13px; height: 13px; border: 1px solid #a8a8a8; background: #fff; display: inline-flex; align-items: center; justify-content: center; font-size: 10px; font-weight: bold; color: #111; flex: none; }
.tree .cb { margin-left: 4px; }
.ti { width: 17px; height: 17px; flex: none; margin-left: 3px; }
.tl { margin-left: 2px; padding: 1px 3px; color: #4b4b4b; }
.tl.sel { background: #ffe873; }

.ptabs { height: 26px; padding-left: 6px; display: flex; align-items: center; gap: 8px; background: #f6f7fb; color: #444; }
.ptab.active { color: #3f76a8; border-left: 1px solid #7a94ad; border-right: 1px solid #7a94ad; height: 24px; line-height: 24px; padding: 0 2px 0 3px; margin-right: -2px; }
.options-head { margin: 5px 6px 0 0; height: 42px; background: #f6f6fb; padding-left: 6px; }
.oh1 { height: 21px; display: flex; justify-content: space-between; align-items: center; padding-right: 10px; }
.oh2 { height: 21px; line-height: 21px; }
.opt { height: 391px; display: flex; align-items: flex-start; gap: 7px; padding: 12px 0 0 12px; color: #444; }
.opt .cb { border-color: #c4c4c4; }

.canvas { flex: 1; margin: 6px 4px 0 1px; border: 2px solid #d2d0c6; border-bottom-width: 3px; background: #fff; position: relative; overflow: hidden; padding: 0 0 0 11px; }
.hint { margin: 0 0 0 -2px; height: 35px; padding-top: 11px; font-size: 12px; line-height: 14px; color: #8a8a8a; letter-spacing: .4px; white-space: nowrap; }
.tools { display: flex; align-items: flex-start; gap: 8px; }
.tbtn { width: 32px; height: 34px; padding: 0; background: #fff; border: 1px solid #c4c4c4; border-radius: 5px; display: flex; align-items: center; justify-content: center; }
.big-t { width: 48px; height: 50px; border: 1.500px solid #8e8e8e; }
.tsv { width: 30px; height: 32px; }
.tsv-b { width: 40px; height: 44px; }
.ok { margin-top: 16px; }

.brand { position: absolute; right: 13px; top: 28px; text-align: right; color: #444; font-family: Inter, sans-serif; }
.brand-name { font-size: 37px; font-weight: 700; line-height: 38px; letter-spacing: -.5px; }
.brand-a { color: transparent; position: relative; }
.brand-mark { position: absolute; left: -1px; top: 5px; width: 30px; height: 28px; }
.brand-ver { font-size: 17px; font-weight: 600; line-height: 18px; margin-top: 5px; letter-spacing: -.3px; }

.triad { position: absolute; left: 17px; top: 737px; width: 100px; height: 110px; }
.tx { font: bold 12px "Liberation Sans", sans-serif; }
.z { fill: #3a3fb0; } .y { fill: #2f7a3c; } .x { fill: #d1433a; }
.model { position: absolute; left: 447px; top: 207px; width: 680px; height: 680px; }
.mt { font: bold 26px "Liberation Sans", sans-serif; }
.mz { fill: #6a7ad8; } .mx { fill: #d77; }

.bottomtabs { flex: 0 0 32px; display: flex; align-items: center; background: #fbfbfb; padding-left: 6px; position: relative; }
.btabs { width: 305px; display: flex; gap: 5.500px; align-items: center; color: #444; letter-spacing: -.08px; margin-top: 2px; }
.btab.active { color: #4a7eae; border-left: 1px solid #8aa0b5; border-right: 1px solid #8aa0b5; padding: 5px 2px; margin-right: -3px; }
.doctab { width: 91px; height: 26px; margin-top: 2px; align-self: flex-start; background: #fff; border: 1px solid #c8c8c8; border-top-color: #b8b8b0; display: flex; align-items: center; padding-left: 1px; }
.doctab .ti { margin-left: 2px; }
.doctab b { margin-left: 2px; color: #2d3d50; }
.x { margin-left: 4px; font-size: 9px; color: #555; }
.doc-nav { margin-left: auto; display: flex; gap: 5px; padding-right: 3px; font-size: 9px; color: #555; }
.navx { color: #333; margin-left: 2px; }

.status { flex: 0 0 27px; background: #215a8e; border-top: 2px solid #1d4f80; display: flex; align-items: center; color: #e9eff6; }
.smsg { flex: 0 0 1228px; padding: 2px 0 0 8px; letter-spacing: .01px; }
.scell { height: 100%; display: flex; align-items: center; justify-content: center; border-left: 1px solid #4c7ba7; }
.alert { width: 37px; gap: 4px; }
.zijde { width: 152px; border-right: 1px solid #4c7ba7; }
.up { font-size: 7px; color: #dbe6f1; }
.ic14 { width: 14px; height: 14px; flex: none; }
.ic18 { width: 18px; height: 18px; flex: none; }
.faded { height: 20px; }
.stools { margin-left: auto; display: flex; align-items: center; gap: 5px; padding-right: 24px; }
.ssep { width: 1px; height: 20px; background: #4c7ba7; }
```
